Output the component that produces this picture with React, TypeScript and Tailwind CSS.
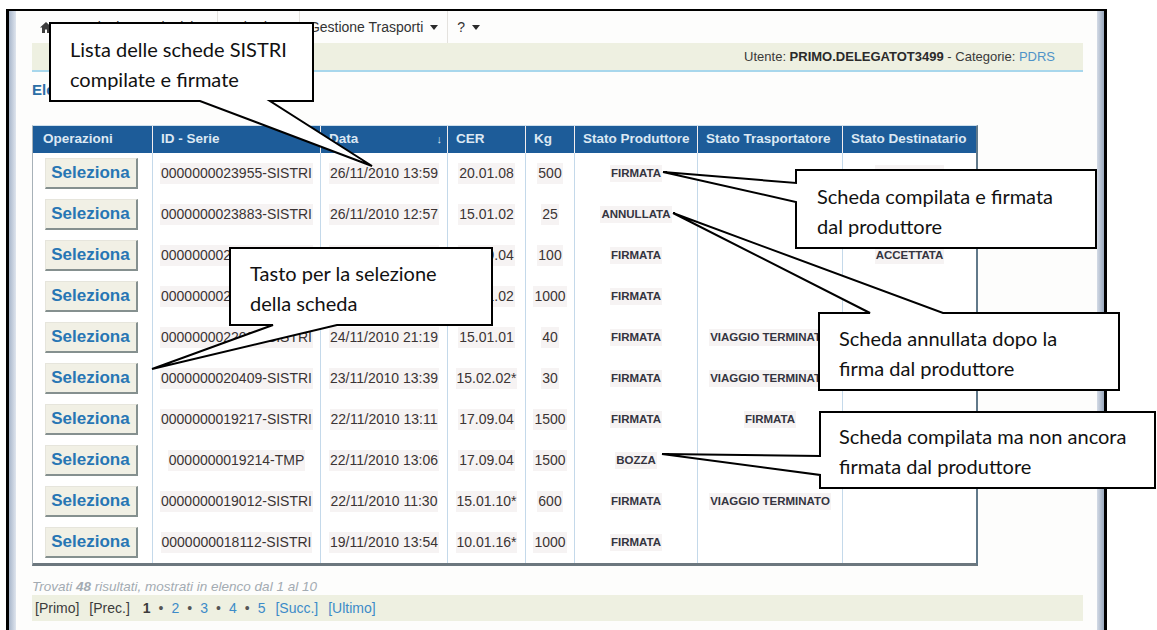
import React from "react";

type Riga = {
  id: string;
  data: string;
  cer: string;
  kg: string;
  prod: string;
  trasp: string;
  dest: string;
};

const righe: Riga[] = [
  { id: "0000000023955-SISTRI", data: "26/11/2010 13:59", cer: "20.01.08", kg: "500", prod: "FIRMATA", trasp: "", dest: "ACCETTATA" },
  { id: "0000000023883-SISTRI", data: "26/11/2010 12:57", cer: "15.01.02", kg: "25", prod: "ANNULLATA", trasp: "", dest: "" },
  { id: "0000000023412-SISTRI", data: "25/11/2010 16:20", cer: "17.09.04", kg: "100", prod: "FIRMATA", trasp: "", dest: "ACCETTATA" },
  { id: "0000000022874-SISTRI", data: "25/11/2010 10:02", cer: "15.01.02", kg: "1000", prod: "FIRMATA", trasp: "", dest: "" },
  { id: "0000000022095-SISTRI", data: "24/11/2010 21:19", cer: "15.01.01", kg: "40", prod: "FIRMATA", trasp: "VIAGGIO TERMINATO", dest: "" },
  { id: "0000000020409-SISTRI", data: "23/11/2010 13:39", cer: "15.02.02*", kg: "30", prod: "FIRMATA", trasp: "VIAGGIO TERMINATO", dest: "" },
  { id: "0000000019217-SISTRI", data: "22/11/2010 13:11", cer: "17.09.04", kg: "1500", prod: "FIRMATA", trasp: "FIRMATA", dest: "" },
  { id: "0000000019214-TMP", data: "22/11/2010 13:06", cer: "17.09.04", kg: "1500", prod: "BOZZA", trasp: "", dest: "" },
  { id: "0000000019012-SISTRI", data: "22/11/2010 11:30", cer: "15.01.10*", kg: "600", prod: "FIRMATA", trasp: "VIAGGIO TERMINATO", dest: "" },
  { id: "0000000018112-SISTRI", data: "19/11/2010 13:54", cer: "10.01.16*", kg: "1000", prod: "FIRMATA", trasp: "", dest: "" },
];

const grid = "grid grid-cols-[120px_168px_127px_78px_49px_123px_145px_133px]";

function Freccia() {
  return (
    <svg width="8" height="5" viewBox="0 0 8 5" className="ml-[7px]">
      <path d="M0 0 H8 L4 5 Z" fill="#2b2b2b" />
    </svg>
  );
}

function VoceMenu({ label }: { label: string }) {
  return (
    <div className="flex items-center h-full px-[9px] border-r border-[#e4e2de]">
      <span>{label}</span>
      <Freccia />
    </div>
  );
}

function Cella({ children, last }: { children?: React.ReactNode; last?: boolean }) {
  return (
    <div className={`flex items-center justify-center ${last ? "" : "border-r border-[#c4d9ea]"}`}>
      {children}
    </div>
  );
}

function Testo({ children }: { children: React.ReactNode }) {
  return <span className="bg-[#f6f3f3] px-[1px] text-[14px] text-[#3b3434]">{children}</span>;
}

function Stato({ children }: { children: React.ReactNode }) {
  return children ? (
    <span className="bg-[#f6f3f3] px-[1px] text-[11.5px] font-bold text-[#34343f]">{children}</span>
  ) : null;
}

export default function App() {
  return (
    <div className="relative w-[1157px] h-[630px] overflow-hidden bg-white font-['Liberation_Sans',Arial,sans-serif]">
      {/* window frame */}
      <div className="ml-[6px] mt-[9px] w-[1101px] h-[640px] border-l-[3px] border-r-[3px] border-t-2 border-black flex">
        <div className="w-[7px] bg-linear-to-r from-[#a9b7cb] to-[#dfe5ee]" />
        <div className="flex-1 bg-[#fdfdfc] pl-[16px] pr-[14px]">
          {/* menu */}
          <div className="h-[32px] flex items-center text-[14px] text-[#333]">
            <svg width="12" height="11" viewBox="0 0 12 11" className="ml-[8px] mr-[11px]">
              <path d="M6 0 L12 5.5 H10 V11 H7 V7.5 H5 V11 H2 V5.5 H0 Z" fill="#3d3d3d" />
            </svg>
            <VoceMenu label="Registri Cronologici" />
            <VoceMenu label="Schede" />
            <VoceMenu label="Gestione Trasporti" />
            <div className="flex items-center h-full px-[9px]">
              <span>?</span>
              <Freccia />
            </div>
          </div>
          {/* utente */}
          <div className="h-[29px] bg-[#eef0e1] border-b-2 border-[#a8d7ec] flex items-center justify-end pr-[28px] text-[13px] text-[#3a3a3a]">
            <span>Utente:&nbsp;</span>
            <span className="font-bold text-[#2a2a2a]">PRIMO.DELEGATOT3499</span>
            <span>&nbsp;- Categorie:&nbsp;</span>
            <span className="text-[#4f93c8]">PDRS</span>
          </div>
          <div className="mt-[9px] h-[18px] leading-[18px] text-[15px] font-bold text-[#2c6fa6]">Elenco Schede</div>
          {/* tabella */}
          <div className="mt-[26px] w-[946px] border-t border-[#cfe0ec] border-l border-l-[#a7b1b8] border-r-2 border-r-[#61798a] border-b-[3px] border-b-[#6c777e]">
            <div className={`${grid} h-[27px] text-[13.5px] font-bold text-[#dce8f3]`}>
              {["Operazioni", "ID - Serie", "Data", "CER", "Kg", "Stato Produttore", "Stato Trasportatore", "Stato Destinatario"].map((h, i) => (
                <div
                  key={h}
                  className={`bg-[#1d5c99] flex items-center ${i === 0 ? "pl-[10px]" : "pl-[8px]"} ${i < 7 ? "border-r border-[#f4eeee]" : ""}`}
                >
                  <span>{h}</span>
                  {h === "Data" && <span className="ml-auto mr-[5px] text-[11px] font-normal">↓</span>}
                </div>
              ))}
            </div>
            {righe.map((r) => (
              <div key={r.id} className={`${grid} h-[41px] bg-white`}>
                <Cella>
                  <button className="w-[93px] h-[31px] bg-[#f1f0e5] border-t border-l border-[#e6e5dc] border-r-2 border-b-2 border-r-[#85908f] border-b-[#85908f] text-[17px] font-bold text-[#2776b4] -ml-[3px]">
                    Seleziona
                  </button>
                </Cella>
                <Cella><Testo>{r.id}</Testo></Cella>
                <Cella><Testo>{r.data}</Testo></Cella>
                <Cella><Testo>{r.cer}</Testo></Cella>
                <Cella><Testo>{r.kg}</Testo></Cella>
                <Cella><Stato>{r.prod}</Stato></Cella>
                <Cella><Stato>{r.trasp}</Stato></Cella>
                <Cella last><Stato>{r.dest}</Stato></Cella>
              </div>
            ))}
          </div>
          <div className="mt-[13px] h-[16px] leading-[16px] text-[13.5px] italic text-[#a3abb2]">
            Trovati <b>48</b> risultati, mostrati in elenco dal 1 al 10
          </div>
          <div className="h-[26px] bg-[#eef0e1] flex items-center pl-[3px] text-[14px] text-[#3c3c3c]">
            <span>[Primo]</span>
            <span className="ml-[10px]">[Prec.]</span>
            <span className="ml-[13px] font-bold">1</span>
            {["2", "3", "4", "5"].map((n) => (
              <React.Fragment key={n}>
                <span className="mx-[8px] text-[#555]">•</span>
                <span className="text-[#3c8bc8]">{n}</span>
              </React.Fragment>
            ))}
            <span className="ml-[10px] text-[#3c8bc8]">[Succ.]</span>
            <span className="ml-[10px] text-[#3c8bc8]">[Ultimo]</span>
          </div>
        </div>
        <div className="w-[7px] bg-linear-to-r from-[#d4dbe6] to-[#98a7bc]" />
      </div>

      {/* callout */}
      <svg className="absolute inset-0 pointer-events-none" width="1157" height="630" viewBox="0 0 1157 630">
        <g fill="#fff" stroke="#000" strokeWidth="2" strokeLinejoin="miter">
          <path d="M50 23 H313 V101 H270 L372 166 L200 101 H50 Z" />
          <path d="M796 170 H1096 V248 H796 V202 L663 172 L796 183 Z" />
          <path d="M819 313 H870 L673 213 L943 313 H1119 V390 H819 Z" />
          <path d="M820 412 H1155 V488 H820 V475 L662 454 L820 456 Z" />
          <path d="M230 248 H492 V325 H337 L152 369 L273 325 H230 Z" />
        </g>
      </svg>
      <div className="absolute inset-0 pointer-events-none font-['Lato',sans-serif] text-[20px] leading-[30px] text-[#111]">
        <div className="absolute left-[70px] top-[34px] whitespace-nowrap">
          <div>Lista delle schede SISTRI</div>
          <div>compilate e firmate</div>
        </div>
        <div className="absolute left-[817px] top-[181px] whitespace-nowrap">
          <div>Scheda compilata e firmata</div>
          <div>dal produttore</div>
        </div>
        <div className="absolute left-[839px] top-[323px] whitespace-nowrap">
          <div>Scheda annullata dopo la</div>
          <div>firma dal produttore</div>
        </div>
        <div className="absolute left-[839px] top-[421px] whitespace-nowrap">
          <div>Scheda compilata ma non ancora</div>
          <div>firmata dal produttore</div>
        </div>
        <div className="absolute left-[250px] top-[258px] whitespace-nowrap">
          <div>Tasto per la selezione</div>
          <div>della scheda</div>
        </div>
      </div>
    </div>
  );
}
